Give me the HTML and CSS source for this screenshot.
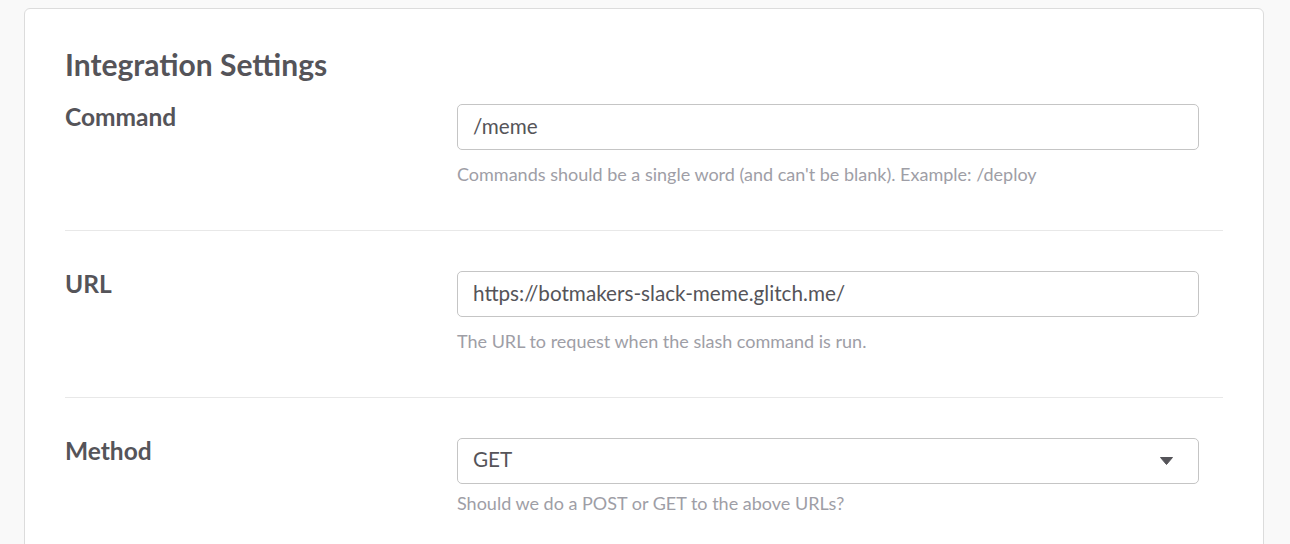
FILE: index.html
```html
<!DOCTYPE html>
<html>
<head>
<meta charset="utf-8">
<link rel="stylesheet" href="styles.css">
</head>
<body>
<div class="card">
  <h2 class="title">Integration Settings</h2>
  <div class="row first">
    <div class="label">Command</div>
    <div class="field">
      <div class="input">/meme</div>
      <div class="help">Commands should be a single word (and can't be blank). Example: /deploy</div>
    </div>
  </div>
  <div class="row">
    <div class="label">URL</div>
    <div class="field">
      <div class="input">https://botmakers-slack-meme.glitch.me/</div>
      <div class="help">The URL to request when the slash command is run.</div>
    </div>
  </div>
  <div class="row last">
    <div class="label">Method</div>
    <div class="field">
      <div class="input select">
        <span>GET</span>
        <svg class="caret" width="13" height="8" viewBox="0 0 13 8"><path d="M0.5 0.5 H12.5 L6.5 7.5 Z" fill="#555459" stroke="#555459" stroke-width="1" stroke-linejoin="round"/></svg>
      </div>
      <div class="help tight">Should we do a POST or GET to the above URLs?</div>
    </div>
  </div>
</div>
</body>
</html>
```
FILE: styles.css
```css
html, body {
  margin: 0;
  padding: 0;
  background: #f9f9f9;
  font-family: Lato, "Noto Sans", sans-serif;
  color: #555459;
}
.card {
  box-sizing: border-box;
  width: 1240px;
  margin: 8px 0 0 24px;
  background: #fff;
  border: 1px solid #dcdcdc;
  border-radius: 6px;
  padding: 37px 40px 40px;
  min-height: 600px;
}
.title {
  margin: 0;
  font-size: 30px;
  font-weight: 700;
  line-height: 36px;
  color: #555459;
}
.row {
  display: grid;
  grid-template-columns: 392px 742px;
  align-items: start;
  padding: 40px 0 44px;
  border-bottom: 1px solid #e8e8e8;
}
.row.first {
  padding-top: 22px;
}
.row.last {
  border-bottom: none;
}
.label {
  margin-top: -2px;
  font-size: 24.5px;
  font-weight: 700;
  line-height: 1.2;
}
.field {
  display: flex;
  flex-direction: column;
}
.input {
  box-sizing: border-box;
  height: 46px;
  border: 1px solid #c5c5c5;
  border-radius: 5px;
  padding: 0 15px 2px;
  display: flex;
  align-items: center;
  font-size: 20.7px;
  color: #555459;
}
.select {
  justify-content: space-between;
  padding-right: 25px;
  padding-bottom: 4px;
}
.caret {
  display: block;
  margin-top: 4px;
}
.help {
  margin-top: 12px;
  font-size: 18px;
  line-height: 24px;
  color: #9e9ea6;
}
.help.tight {
  margin-top: 7px;
}
```
